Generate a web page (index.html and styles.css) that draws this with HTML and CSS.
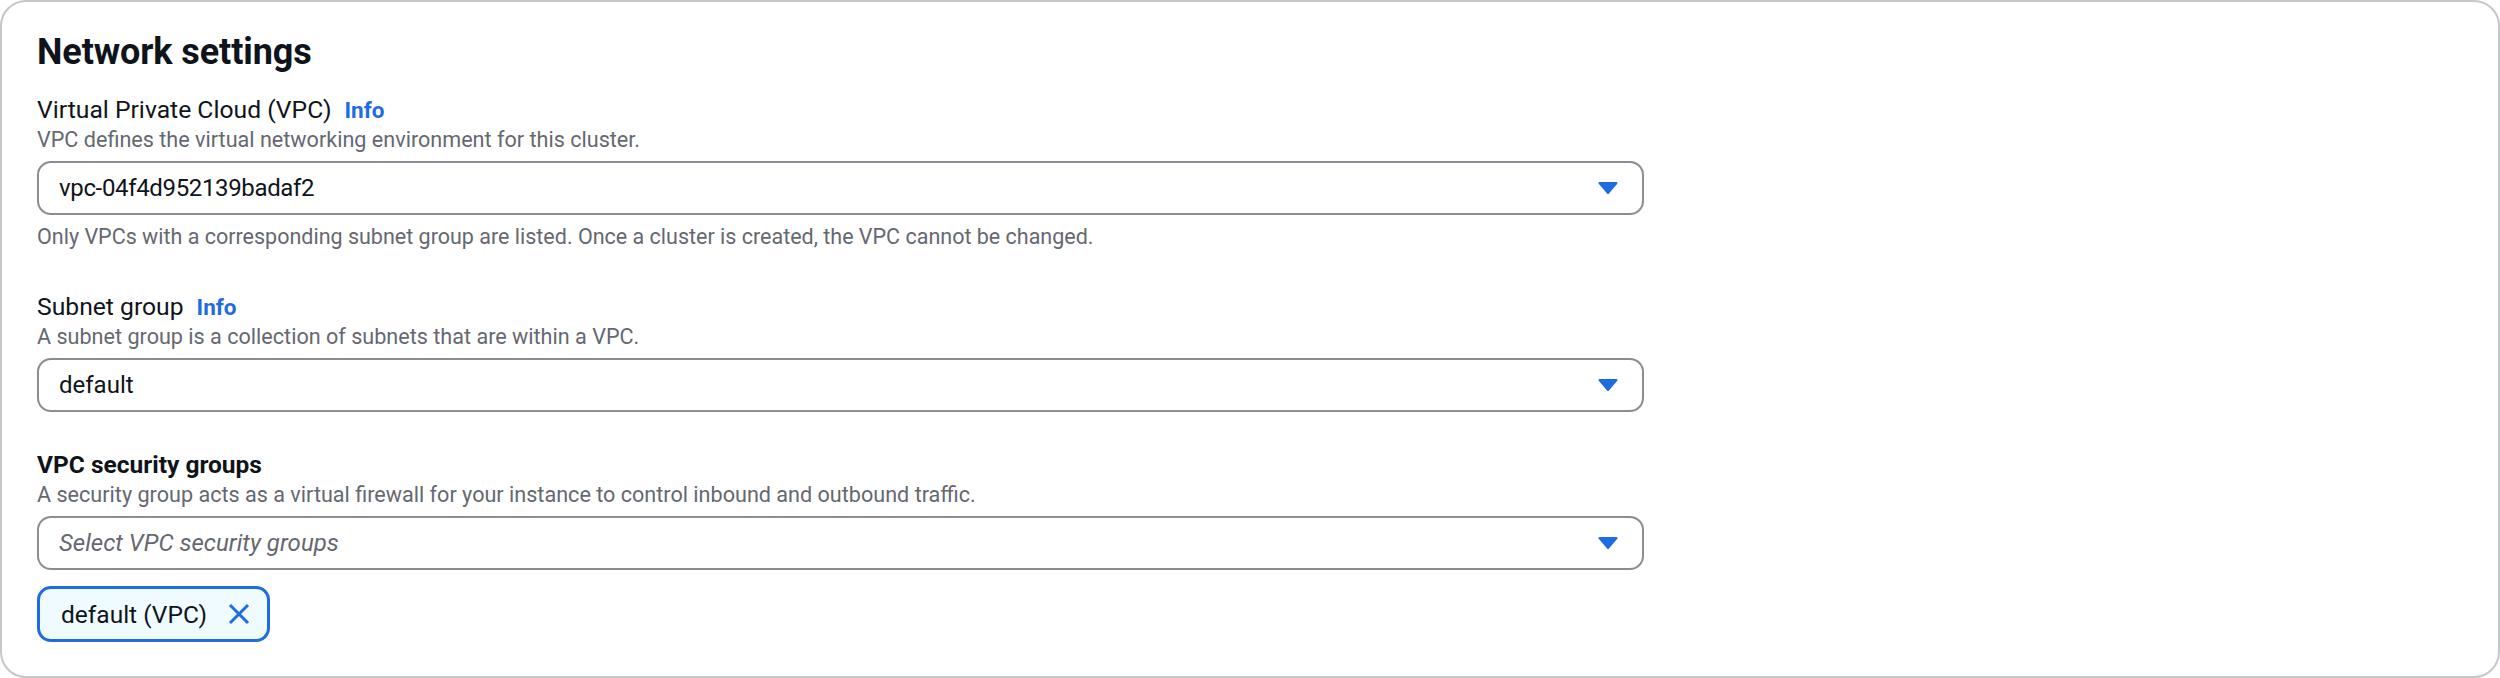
FILE: index.html
```html
<!DOCTYPE html>
<html lang="en">
<head>
<meta charset="utf-8">
<title>Network settings</title>
<link rel="stylesheet" href="styles.css">
</head>
<body>
<section class="card">
  <h2 class="card-title">Network settings</h2>
  <div class="fields">
    <div class="field">
      <div class="label">Virtual Private Cloud (VPC) <a class="info" href="#">Info</a></div>
      <div class="desc">VPC defines the virtual networking environment for this cluster.</div>
      <div class="select">
        <span class="value mono-ish">vpc-04f4d952139badaf2</span>
        <svg class="caret" viewBox="0 0 20 12" width="20" height="12"><path d="M1.5 1 L18.5 1 L10 11 Z" fill="currentColor" stroke="currentColor" stroke-width="2" stroke-linejoin="round"/></svg>
      </div>
      <div class="constraint">Only VPCs with a corresponding subnet group are listed. Once a cluster is created, the VPC cannot be changed.</div>
    </div>
    <div class="field">
      <div class="label">Subnet group <a class="info" href="#">Info</a></div>
      <div class="desc">A subnet group is a collection of subnets that are within a VPC.</div>
      <div class="select">
        <span class="value">default</span>
        <svg class="caret" viewBox="0 0 20 12" width="20" height="12"><path d="M1.5 1 L18.5 1 L10 11 Z" fill="currentColor" stroke="currentColor" stroke-width="2" stroke-linejoin="round"/></svg>
      </div>
    </div>
    <div class="field">
      <div class="label label-bold">VPC security groups</div>
      <div class="desc">A security group acts as a virtual firewall for your instance to control inbound and outbound traffic.</div>
      <div class="select">
        <span class="placeholder">Select VPC security groups</span>
        <svg class="caret" viewBox="0 0 20 12" width="20" height="12"><path d="M1.5 1 L18.5 1 L10 11 Z" fill="currentColor" stroke="currentColor" stroke-width="2" stroke-linejoin="round"/></svg>
      </div>
      <div class="tokens">
        <div class="token">
          <span class="token-label">default (VPC)</span>
          <svg class="token-x" viewBox="0 0 22 22" width="22" height="22"><path d="M2 2 L20 20 M20 2 L2 20" stroke="currentColor" stroke-width="3" fill="none"/></svg>
        </div>
      </div>
    </div>
  </div>
</section>
</body>
</html>
```

FILE: styles.css
```css
* { box-sizing: border-box; }

html, body {
  margin: 0;
  padding: 0;
  background: #ffffff;
}

body {
  font-family: Roboto, "Open Sans", "Liberation Sans", sans-serif;
  color: #0f141a;
  width: 2500px;
  height: 678px;
}

.card {
  width: 2500px;
  height: 678px;
  border: 2px solid #c6c6cd;
  border-radius: 26px;
  padding: 30px 35px 34px 35px;
  display: flex;
  flex-direction: column;
}

.card-title {
  margin: 0;
  font-size: 36px;
  line-height: 40px;
  font-weight: 700;
  letter-spacing: -0.1px;
}

.fields {
  margin-top: 22px;
  display: flex;
  flex-direction: column;
  gap: 37px;
}

.field {
  width: 1607px;
  display: flex;
  flex-direction: column;
}

.label {
  font-size: 24.7px;
  line-height: 32px;
  display: flex;
  align-items: baseline;
  gap: 13px;
}

.label-bold {
  font-weight: 700;
  font-size: 24.5px;
}

.info {
  color: #1f6ce0;
  font-weight: 700;
  font-size: 22.5px;
  text-decoration: none;
}

.desc {
  font-size: 21.6px;
  line-height: 28px;
  color: #656871;
}

.select {
  margin-top: 7px;
  height: 54px;
  border: 2px solid #8c8c94;
  border-radius: 14px;
  display: flex;
  align-items: center;
  justify-content: space-between;
  padding: 0 24px 0 20px;
  font-size: 24px;
}

.mono-ish {
  letter-spacing: -0.35px;
}

.placeholder {
  font-style: italic;
  color: #656871;
}

.caret {
  color: #1f6ce0;
  width: 20px;
  height: 12px;
}

.constraint {
  margin-top: 8px;
  padding-bottom: 3px;
  font-size: 21.5px;
  line-height: 28px;
  color: #656871;
}

.tokens {
  margin-top: 16px;
  display: flex;
}

.token {
  height: 56px;
  border: 3px solid #1f6ce0;
  border-radius: 14px;
  background: #f0fbff;
  display: flex;
  align-items: center;
  gap: 21px;
  padding: 0 17px 0 21px;
  font-size: 24.5px;
}

.token-x {
  color: #1f6ce0;
}
```
